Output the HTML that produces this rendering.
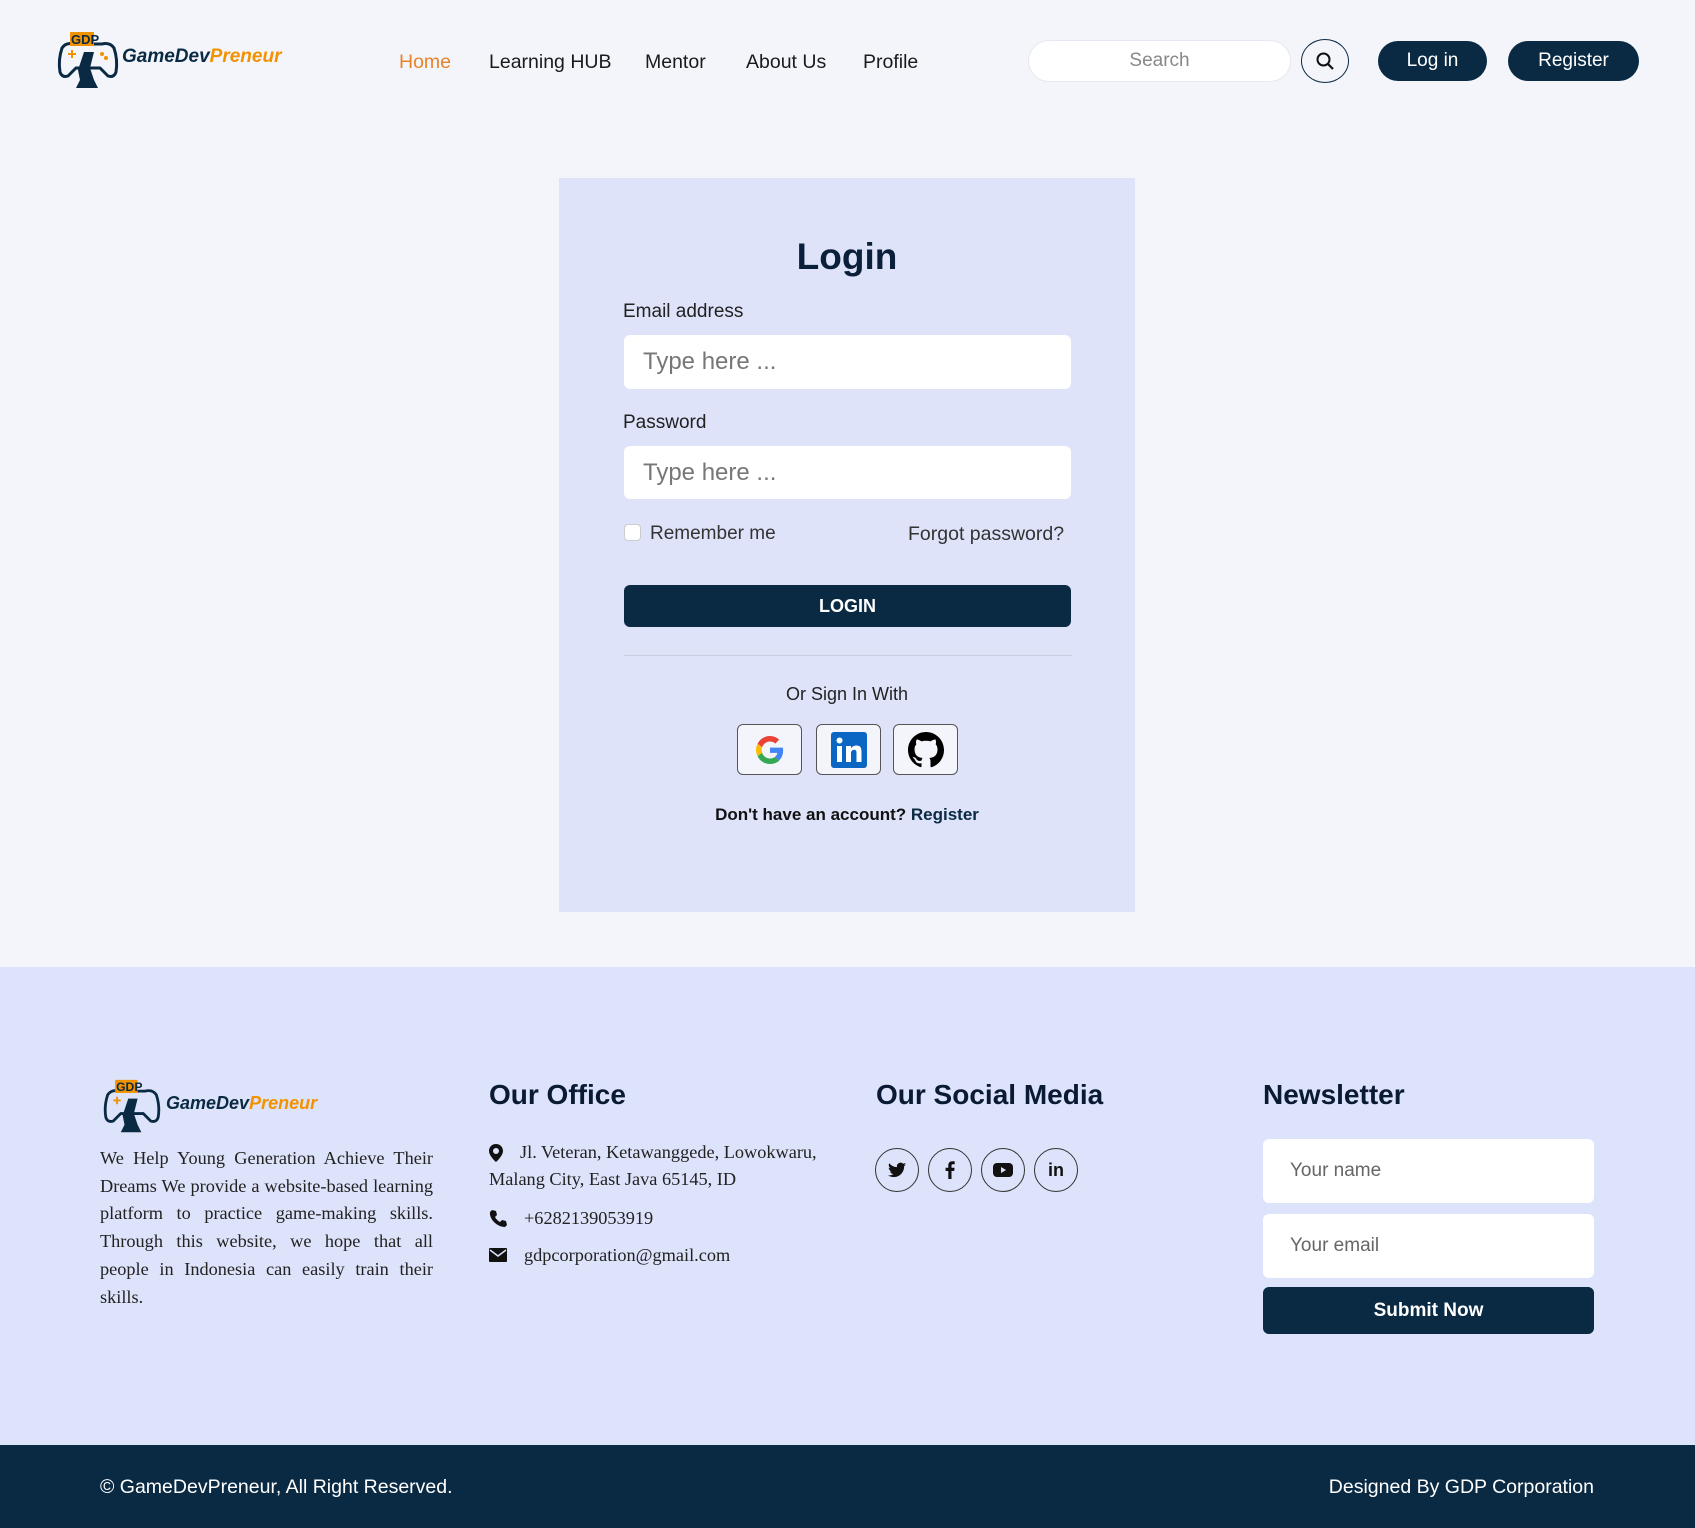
<!DOCTYPE html>
<html><head><meta charset="utf-8"><style>
*{margin:0;padding:0;box-sizing:border-box}
body{width:1695px;height:1528px;position:relative;background:#f3f5fb;font-family:"Liberation Sans",sans-serif;color:#111;overflow:hidden}
.a{position:absolute}
.nav{font-size:19.5px;top:51px;color:#1a1a1a}
.btn{background:#0a2a43;color:#fff;border-radius:22px;font-size:19px;display:flex;align-items:center;justify-content:center}
.inp{background:#fff;border-radius:6px;color:#777;font-size:24px;display:flex;align-items:center;padding-left:19px}
.lbl{font-size:19px;color:#222}
.soc{width:65px;height:51px;border:1px solid #555;border-radius:6px;background:#f3f5fb;display:flex;align-items:center;justify-content:center}
.fh{font-size:28px;font-weight:bold;color:#0a1a33;top:1079px}
.ser{font-family:"Liberation Serif",serif;font-size:18.3px;color:#222}
.circ{width:44px;height:44px;border:1px solid #333;border-radius:50%;display:flex;align-items:center;justify-content:center;top:1148px;font-weight:bold;font-size:18px}
.ninp{left:1263px;width:331px;height:64px;background:#fff;border-radius:6px;font-size:19px;color:#666;display:flex;align-items:center;padding-left:27px}
</style></head><body>
<svg class="a" style="left:54px;top:30px" width="68" height="62" viewBox="0 0 68 62"><path d="M8 18 Q4 30 6 42 Q8 48 14 46 L22 38 L46 38 L54 46 Q60 48 62 42 Q64 30 60 18 Q56 12 48 14 L20 14 Q12 12 8 18Z" fill="none" stroke="#0a2a43" stroke-width="3"/><rect x="16" y="2" width="24" height="14" fill="#f39200"/><text x="17" y="14" font-size="13" font-weight="bold" fill="#0a2a43" font-family="Liberation Sans">GDP</text><path d="M30 22 L40 22 L36 38 L40 50 L44 58 L22 58 L26 50 L24 40Z" fill="#0a2a43"/><path d="M14 24h8M18 20v8" stroke="#f39200" stroke-width="2"/><circle cx="48" cy="24" r="2" fill="#f39200"/><circle cx="52" cy="28" r="2" fill="#f39200"/></svg>
<div class="a" style="left:122px;top:46px;font-size:19px;font-weight:bold;font-style:italic;color:#0a2a43">GameDev<span style="color:#f39200">Preneur</span></div>
<div class="a nav" style="left:399px;color:#e8832a">Home</div>
<div class="a nav" style="left:489px">Learning HUB</div>
<div class="a nav" style="left:645px">Mentor</div>
<div class="a nav" style="left:746px">About Us</div>
<div class="a nav" style="left:863px">Profile</div>
<div class="a" style="left:1028px;top:40px;width:263px;height:42px;background:#fff;border-radius:21px;border:1px solid #e5e8f0;display:flex;align-items:center;justify-content:center;color:#888;font-size:19px">Search</div>
<div class="a" style="left:1301px;top:39px;width:48px;height:44px;border:1.5px solid #0a2a43;border-radius:50%;display:flex;align-items:center;justify-content:center"><svg width="20" height="20" viewBox="0 0 20 20"><circle cx="8.5" cy="8.5" r="6" fill="none" stroke="#111" stroke-width="2"/><path d="M13 13l5 5" stroke="#111" stroke-width="2.2"/></svg></div>
<div class="a btn" style="left:1378px;top:41px;width:109px;height:40px">Log in</div>
<div class="a btn" style="left:1508px;top:41px;width:131px;height:40px">Register</div>
<div class="a" style="left:559px;top:178px;width:576px;height:734px;background:#dee3fa"></div>
<div class="a" style="left:559px;width:576px;top:236px;text-align:center;font-size:37px;font-weight:bold;color:#0a1f3a">Login</div>
<div class="a lbl" style="left:623px;top:301px">Email address</div>
<div class="a inp" style="left:624px;top:335px;width:447px;height:54px">Type here ...</div>
<div class="a lbl" style="left:623px;top:412px">Password</div>
<div class="a inp" style="left:624px;top:446px;width:447px;height:53px">Type here ...</div>
<div class="a" style="left:624px;top:524px;width:17px;height:17px;background:#fff;border:1px solid #ccc;border-radius:4px"></div>
<div class="a lbl" style="left:650px;top:523px;color:#333">Remember me</div>
<div class="a lbl" style="left:908px;top:523px;color:#333;font-size:19.5px">Forgot password?</div>
<div class="a btn" style="left:624px;top:585px;width:447px;height:42px;border-radius:6px;font-weight:bold;font-size:18px">LOGIN</div>
<div class="a" style="left:624px;top:655px;width:448px;height:1px;background:#c8cde0"></div>
<div class="a" style="left:559px;width:576px;top:684px;text-align:center;font-size:18px;color:#222">Or Sign In With</div>
<div class="a soc" style="left:737px;top:724px"><svg width="28" height="28" viewBox="0 0 48 48"><path fill="#EA4335" d="M24 9.5c3.5 0 6.6 1.2 9 3.5l6.7-6.7C35.6 2.5 30.2 0 24 0 14.6 0 6.6 5.4 2.7 13.3l7.8 6C12.4 13.7 17.7 9.5 24 9.5z"/><path fill="#4285F4" d="M46.5 24.5c0-1.6-.1-3.1-.4-4.5H24v9h12.7c-.6 2.9-2.2 5.4-4.7 7.1l7.6 5.9c4.4-4.1 6.9-10.1 6.9-17.5z"/><path fill="#FBBC05" d="M10.5 28.7c-.5-1.5-.8-3.1-.8-4.7s.3-3.200.8-4.7l-7.8-6C1 16.6 0 20.2 0 24s1 7.4 2.7 10.7l7.8-6z"/><path fill="#34A853" d="M24 48c6.5 0 11.9-2.1 15.9-5.8l-7.6-5.9c-2.1 1.4-4.9 2.3-8.3 2.3-6.3 0-11.6-4.2-13.5-9.9l-7.8 6C6.6 42.6 14.6 48 24 48z"/></svg></div>
<div class="a soc" style="left:816px;top:724px"><svg width="36" height="36" viewBox="0 0 36 36"><rect width="36" height="36" rx="3" fill="#0a66c2"/><rect x="6" y="14" width="5" height="16" fill="#fff"/><circle cx="8.5" cy="8.5" r="3" fill="#fff"/><path d="M15 14h5v2.5c1-1.8 3-3 5.5-3 4 0 5 2.5 5 6.5V30h-5v-9c0-2-.5-3.2-2.3-3.2-2 0-3.2 1.4-3.2 3.6V30h-5z" fill="#fff"/></svg></div>
<div class="a soc" style="left:893px;top:724px"><svg width="36" height="36" viewBox="0 0 16 16"><path fill="#000" d="M8 0C3.58 0 0 3.58 0 8c0 3.54 2.29 6.53 5.47 7.59.4.07.55-.17.55-.38v-1.33c-2.23.48-2.7-1.07-2.7-1.07-.36-.92-.89-1.17-.89-1.17-.73-.5.05-.49.05-.49.8.06 1.23.83 1.230.83.72 1.22 1.87.87 2.33.66.07-.52.28-.87.51-1.07-1.780-.2-3.640-.89-3.640-3.950 0-.87.31-1.590.82-2.150-.08-.2-.36-1.02.08-2.120 0 0 .67-.21 2.2.82.64-.18 1.32-.27 2-.27s1.36.09 2 .27c1.53-1.04 2.2-.82 2.2-.82.44 1.1.16 1.92.08 2.12.51.56.82 1.27.82 2.15 0 3.07-1.87 3.75-3.65 3.95.29.25.54.73.54 1.48v2.2c0 .21.15.46.55.38A8.01 8.01 0 0016 8c0-4.420-3.58-8-8-8z"/></svg></div>
<div class="a" style="left:559px;width:576px;top:805px;text-align:center;font-size:17px;font-weight:bold;color:#111">Don't have an account? <span style="color:#0a2a43">Register</span></div>
<div class="a" style="left:0;top:967px;width:1695px;height:478px;background:#dde3fa"></div>
<svg class="a" style="left:100px;top:1078px" width="64" height="58" viewBox="0 0 68 62"><path d="M8 18 Q4 30 6 42 Q8 48 14 46 L22 38 L46 38 L54 46 Q60 48 62 42 Q64 30 60 18 Q56 12 48 14 L20 14 Q12 12 8 18Z" fill="none" stroke="#0a2a43" stroke-width="3"/><rect x="16" y="2" width="24" height="14" fill="#f39200"/><text x="17" y="14" font-size="13" font-weight="bold" fill="#0a2a43" font-family="Liberation Sans">GDP</text><path d="M30 22 L40 22 L36 38 L40 50 L44 58 L22 58 L26 50 L24 40Z" fill="#0a2a43"/><path d="M14 24h8M18 20v8" stroke="#f39200" stroke-width="2"/></svg>
<div class="a" style="left:166px;top:1093px;font-size:18px;font-weight:bold;font-style:italic;color:#0a2a43">GameDev<span style="color:#f39200">Preneur</span></div>
<div class="a ser" style="left:100px;top:1145px;width:333px;text-align:justify;line-height:27.7px">We Help Young Generation Achieve Their Dreams We provide a website-based learning platform to practice game-making skills. Through this website, we hope that all people in Indonesia can easily train their skills.</div>
<div class="a fh" style="left:489px">Our Office</div>
<svg class="a" style="left:489px;top:1144px" width="14" height="18" viewBox="0 0 14 18"><path d="M7 0C3 0 0 3 0 7c0 5 7 11 7 11s7-6 7-11c0-4-3-7-7-7zm0 10a3 3 0 110-6 3 3 0 010 6z" fill="#111"/></svg>
<div class="a ser" style="left:520px;top:1142px">Jl. Veteran, Ketawanggede, Lowokwaru,</div>
<div class="a ser" style="left:489px;top:1169px">Malang City, East Java 65145, ID</div>
<svg class="a" style="left:489px;top:1209px" width="18" height="18" viewBox="0 0 18 18"><path d="M3 1l4 1 1 4-2 2c1 2 3 4 5 5l2-2 4 1 1 4-2 2C8 18 0 10 1 3z" fill="#111"/></svg>
<div class="a ser" style="left:524px;top:1208px">+6282139053919</div>
<svg class="a" style="left:489px;top:1248px" width="18" height="14" viewBox="0 0 18 14"><rect width="18" height="14" rx="1" fill="#111"/><path d="M1 2l8 6 8-6" stroke="#dde3fa" stroke-width="1.5" fill="none"/></svg>
<div class="a ser" style="left:524px;top:1245px">gdpcorporation@gmail.com</div>
<div class="a fh" style="left:876px">Our Social Media</div>
<div class="a circ" style="left:875px"><svg width="18" height="16" viewBox="0 0 24 20"><path d="M24 2.4c-.9.4-1.8.7-2.8.8 1-.6 1.8-1.6 2.2-2.7-1 .6-2 1-3.1 1.2A4.9 4.9 0 0012 6.2 14 14 0 011.7 1a4.9 4.9 0 001.5 6.6c-.8 0-1.6-.2-2.2-.6 0 2.4 1.7 4.4 3.9 4.8-.7.2-1.5.2-2.2.1.6 2 2.4 3.4 4.6 3.4A9.9 9.9 0 010 17.3 14 14 0 007.5 19.5c9 0 14-7.5 14-14v-.6c1-.7 1.8-1.6 2.5-2.5z" fill="#111"/></svg></div>
<div class="a circ" style="left:928px"><svg width="10" height="18" viewBox="0 0 10 18"><path d="M6.5 18V10h2.7l.4-3.2H6.5V4.8c0-.9.3-1.5 1.6-1.5H9.7V.4C9.4.3 8.4.2 7.3.2 4.9.2 3.3 1.6 3.3 4.3v2.5H.6V10h2.7v8z" fill="#111"/></svg></div>
<div class="a circ" style="left:981px"><svg width="20" height="14" viewBox="0 0 20 14"><rect width="20" height="14" rx="4" fill="#111"/><path d="M8 4v6l5-3z" fill="#dde3fa"/></svg></div>
<div class="a circ" style="left:1034px">in</div>
<div class="a fh" style="left:1263px">Newsletter</div>
<div class="a ninp" style="top:1139px">Your name</div>
<div class="a ninp" style="top:1214px">Your email</div>
<div class="a btn" style="left:1263px;top:1287px;width:331px;height:47px;border-radius:6px;font-weight:bold">Submit Now</div>
<div class="a" style="left:0;top:1445px;width:1695px;height:83px;background:#0a2a43"></div>
<div class="a" style="left:100px;top:1476px;color:#fff;font-size:19.5px">© GameDevPreneur, All Right Reserved.</div>
<div class="a" style="right:101px;top:1476px;color:#fff;font-size:19.5px">Designed By GDP Corporation</div>
</body></html>
